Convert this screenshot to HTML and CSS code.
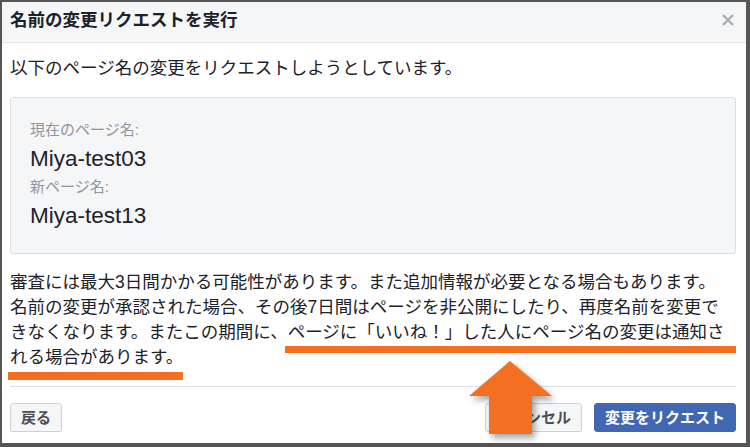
FILE: index.html
```html
<!DOCTYPE html>
<html lang="ja">
<head>
<meta charset="utf-8">
<title>名前の変更リクエストを実行</title>
<link rel="stylesheet" href="styles.css">
</head>
<body>
<div class="frame">
  <div class="dialog">
    <div class="header">
      <h1 class="title">名前の変更リクエストを実行</h1>
      <span class="close">
        <svg width="12" height="12" viewBox="0 0 12 12"><path d="M1 1 L11 11 M11 1 L1 11" stroke="#a9acb1" stroke-width="2.3" stroke-linecap="butt" fill="none"/></svg>
      </span>
    </div>
    <div class="body">
      <p class="intro">以下のページ名の変更をリクエストしようとしています。</p>
      <div class="names">
        <div class="label">現在のページ名:</div>
        <div class="name">Miya-test03</div>
        <div class="label">新ページ名:</div>
        <div class="name">Miya-test13</div>
      </div>
      <p class="note">審査には最大3日間かかる可能性があります。また追加情報が必要となる場合もあります。<br>名前の変更が承認された場合、その後7日間はページを非公開にしたり、再度名前を変更で<br>きなくなります。またこの期間に、ページに「いいね！」した人にページ名の変更は通知さ<br>れる場合があります。</p>
    </div>
    <div class="footer">
      <button class="btn">戻る</button>
      <div class="spacer"></div>
      <button class="btn">キャンセル</button>
      <button class="btn primary">変更をリクエスト</button>
    </div>
  </div>
  <div class="mark mark-one"></div>
  <div class="mark mark-two"></div>
  <svg class="arrow" width="110" height="92" viewBox="0 0 110 92"><path d="M50 6 L92 41 L72 41 L72 79 L29 79 L29 41 L9 41 Z" fill="#f37022"/></svg>
</div>
</body>
</html>
```

FILE: styles.css
```css
* { box-sizing: border-box; }
html, body { margin: 0; padding: 0; background: #fff; }
body {
  font-family: "Liberation Sans", "Noto Sans CJK JP", sans-serif;
  color: #1d2129;
}
.frame {
  position: relative;
  width: 750px;
  height: 447px;
  border-style: solid;
  border-color: #555555;
  border-width: 2px 4px 4px 2px;
  overflow: hidden;
  background: #fff;
}
.dialog {
  display: flex;
  flex-direction: column;
  height: 100%;
}
.header {
  display: flex;
  align-items: flex-start;
  justify-content: space-between;
  background: #f5f6f7;
  border-bottom: 1px solid #e5e5e5;
  height: 41px;
  padding: 6px 12px 0 8px;
}
.title {
  margin: 0;
  font-size: 17.5px;
  line-height: 24px;
  font-weight: 700;
  color: #1d2129;
}
.close {
  display: flex;
  margin-top: 6px;
}
.body {
  padding: 13px 10px 0 8px;
}
.intro {
  margin: 0;
  font-size: 17.5px;
  line-height: 25px;
}
.names {
  margin-top: 16px;
  background: #f5f6f7;
  border: 1px solid #dddfe2;
  border-radius: 3px;
  padding: 22px 19px 19px;
}
.label {
  font-size: 15px;
  line-height: 20px;
  color: #90949c;
}
.name {
  font-size: 22.5px;
  line-height: 37px;
  color: #1d2129;
}
.note {
  margin: 16px 0 0;
  font-size: 17.5px;
  line-height: 25px;
  white-space: nowrap;
}
.footer {
  display: flex;
  gap: 12px;
  margin: 16px 10px 0 8px;
  border-top: 1px solid #dddfe2;
  padding-top: 16px;
}
.spacer { flex: 1; }
.btn {
  height: 29px;
  padding: 0 10px;
  border: 1px solid #ccd0d5;
  border-radius: 3px;
  background: #f5f6f7;
  color: #4b4f56;
  font-family: "Liberation Sans", "Noto Sans CJK JP", sans-serif;
  font-size: 15px;
  font-weight: 700;
  line-height: 27px;
}
.btn.primary {
  background: #4267b2;
  border-color: #4267b2;
  color: #fff;
}
.mark {
  position: absolute;
  background: #f37022;
}
.mark-one {
  left: 283px;
  top: 344px;
  width: 451px;
  height: 7px;
}
.mark-two {
  left: 6px;
  top: 370px;
  width: 175px;
  height: 8px;
}
.arrow {
  position: absolute;
  left: 458px;
  top: 353px;
  overflow: visible;
  filter: drop-shadow(3px 4px 3px rgba(0, 0, 0, 0.35));
}
```
